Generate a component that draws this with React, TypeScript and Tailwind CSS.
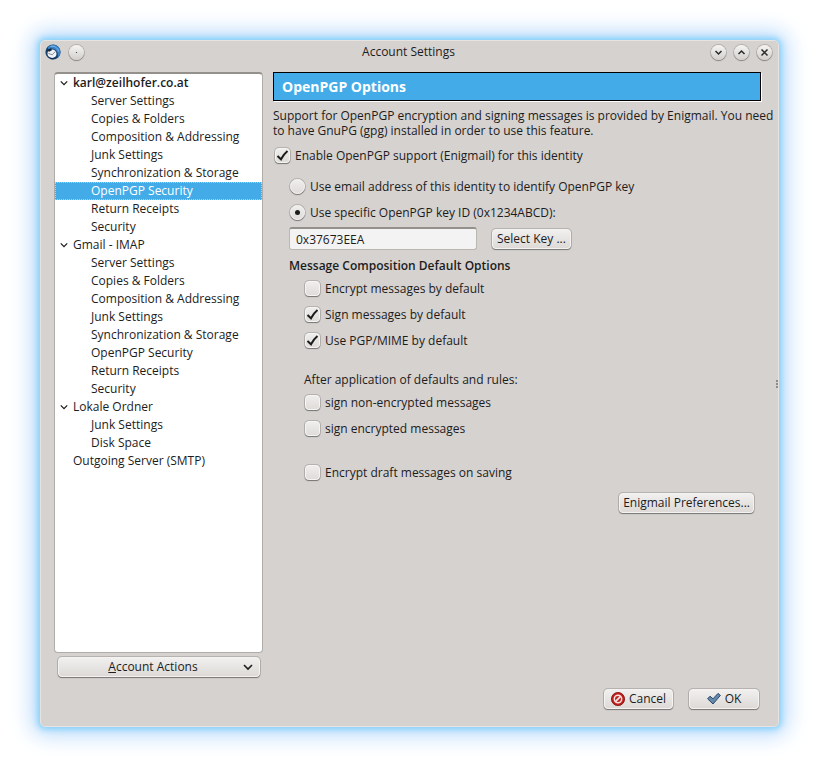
import { useState, type ReactNode } from "react"
import { clsx } from "clsx"

interface Account {
  name: string
  pages: string[]
  isDefault?: boolean
}

const ACCOUNTS: Account[] = [
  {
    name: "karl@zeilhofer.co.at",
    isDefault: true,
    pages: [
      "Server Settings",
      "Copies & Folders",
      "Composition & Addressing",
      "Junk Settings",
      "Synchronization & Storage",
      "OpenPGP Security",
      "Return Receipts",
      "Security",
    ],
  },
  {
    name: "Gmail - IMAP",
    pages: [
      "Server Settings",
      "Copies & Folders",
      "Composition & Addressing",
      "Junk Settings",
      "Synchronization & Storage",
      "OpenPGP Security",
      "Return Receipts",
      "Security",
    ],
  },
  { name: "Lokale Ordner", pages: ["Junk Settings", "Disk Space"] },
]

function Chevron({ className }: { className?: string }) {
  return (
    <svg viewBox="0 0 10 10" className={className} fill="none" stroke="currentColor" aria-hidden="true">
      <path d="M1 3l4 4 4-4" strokeWidth="1.6" />
    </svg>
  )
}

function ThunderbirdIcon() {
  return (
    <svg viewBox="0 0 16 16" className="size-4" aria-hidden="true">
      <circle cx="8" cy="8" r="7.6" fill="#17406f" />
      <path d="M3 3C6-.2 11-.2 13.800 3.400c2.600 3.600 1.800 8-1.400 10.800 1-3 .4-6.400-2.200-8.400C8.400 4.400 5.400 4 3 5z" fill="#3a82c6" />
      <path d="M5.500 2.600C9 1.400 12.600 3.400 13.600 7.400" fill="none" stroke="#8cc4ee" strokeWidth=".9" />
      <path d="M2.600 8.600C3.200 6.400 5.200 5 7.600 5.400c3 .6 4.600 3.400 3.600 6-.8 2.200-3.400 3-5.800 2.200C3.200 12.800 2 10.800 2.600 8.600z" fill="#f1f3f5" />
      <path d="M3.400 9.400l3.800 1.400 3-3.200" fill="none" stroke="#76828e" strokeWidth=".9" />
      <path d="M2 6.600l3.200-2 2.400 1.200-3.400 2z" fill="#16273a" />
      <path d="M3 12.400c2 1.800 5.400 2.200 8 .6l-2.400 2.200H6z" fill="#0f2f57" />
    </svg>
  )
}

function RoundButton({ label, children }: { label: string; children: ReactNode }) {
  return (
    <button
      type="button"
      aria-label={label}
      className="grid size-[15px] place-items-center rounded-full bg-linear-to-b from-[#f6f5f4] to-[#d2cfcc] text-[#2b2b2b] shadow-[0_1px_1px_#888,0_0_0_1px_#b5b2af]"
    >
      <svg viewBox="0 0 15 15" className="size-[15px]" fill="none" stroke="currentColor" strokeWidth="1.5">
        {children}
      </svg>
    </button>
  )
}

function PushButton({ className, children }: { className?: string; children: ReactNode }) {
  return (
    <button
      type="button"
      className={clsx(
        "flex h-5 items-center justify-center rounded-[4px] border border-[#f4f3f2] bg-linear-to-b from-[#f1f0ef] to-[#dddad7] whitespace-nowrap shadow-[0_1px_1px_#777,0_0_0_1px_#b5b2af]",
        className
      )}
    >
      {children}
    </button>
  )
}

function CheckOption({ label, checked }: { label: string; checked?: boolean }) {
  return (
    <label className="flex h-[26px] items-start gap-1 leading-[26px]">
      <span className="relative mt-1 grid size-[17px] place-items-center">
        <input
          type="checkbox"
          defaultChecked={checked}
          className="peer size-[15px] appearance-none rounded-[4px] border border-[#f6f5f4] bg-linear-to-b from-[#efeeed] to-[#dfdcd9] shadow-[0_1px_1px_#777,0_0_0_1px_#b5b2af]"
        />
        <svg
          viewBox="0 0 17 17"
          className="pointer-events-none invisible absolute inset-0 text-[#1c1c1c] peer-checked:visible"
          fill="none"
          stroke="currentColor"
          strokeWidth="2"
        >
          <path d="M3.500 9L7 12.300c1.500-3 3.500-5.800 6.500-8.300" />
        </svg>
      </span>
      {label}
    </label>
  )
}

interface RadioOptionProps {
  label: string
  checked: boolean
  onSelect: () => void
}

function RadioOption({ label, checked, onSelect }: RadioOptionProps) {
  return (
    <label className="flex h-[26px] items-start gap-1 leading-[26px]">
      <span className="relative mt-1 grid size-[17px] place-items-center">
        <input
          type="radio"
          name="key-mode"
          checked={checked}
          onChange={onSelect}
          className="peer size-[15px] appearance-none rounded-full border border-[#f6f5f4] bg-linear-to-b from-[#efeeed] to-[#dfdcd9] shadow-[0_1px_1px_#777,0_0_0_1px_#b5b2af]"
        />
        <span className="pointer-events-none invisible absolute inset-[6px] rounded-full bg-[#1c1c1c] peer-checked:visible" />
      </span>
      {label}
    </label>
  )
}

function AccountTree() {
  const [selected, setSelected] = useState("0-5")

  return (
    <nav
      aria-label="Accounts"
      className="grow rounded-[4px] border border-t-2 border-[#b0aca8] border-t-[#94908c] bg-white leading-[18px]"
    >
      <ul>
        {ACCOUNTS.map((account, i) => (
          <li key={account.name}>
            <div className={clsx("flex items-center gap-1 pl-[5px]", account.isDefault && "font-semibold")}>
              <Chevron className="mr-px size-2" />
              {account.name}
            </div>
            <ul>
              {account.pages.map((page, j) => {
                const id = `${i}-${j}`
                return (
                  <li key={page}>
                    <button
                      type="button"
                      onClick={() => setSelected(id)}
                      className={clsx(
                        "block h-[18px] w-full pl-9 text-left",
                        selected === id &&
                          "bg-[#43ace8] text-white outline-1 -outline-offset-1 outline-dotted outline-[#e5c88f]"
                      )}
                    >
                      {page}
                    </button>
                  </li>
                )
              })}
            </ul>
          </li>
        ))}
        <li className="pl-[18px]">Outgoing Server (SMTP)</li>
      </ul>
    </nav>
  )
}

function OpenPgpPane() {
  const [useKeyId, setUseKeyId] = useState(true)

  return (
    <main className="min-w-0 grow">
      <h1 className="flex h-[29px] items-center border border-black bg-[#43ace8] px-2 text-sm font-bold text-white shadow-[1px_1px_0_#fff]">
        OpenPGP Options
      </h1>
      <p className="mt-[7px] -mr-4 leading-[15px]">
        Support for OpenPGP encryption and signing messages is provided by Enigmail. You need to have GnuPG (gpg)
        installed in order to use this feature.
      </p>
      <div className="mt-[5px] pl-px">
        <CheckOption label="Enable OpenPGP support (Enigmail) for this identity" checked />
      </div>

      <div className="mt-[5px] pl-4">
        <RadioOption
          label="Use email address of this identity to identify OpenPGP key"
          checked={!useKeyId}
          onSelect={() => setUseKeyId(false)}
        />
        <RadioOption
          label="Use specific OpenPGP key ID (0x1234ABCD):"
          checked={useKeyId}
          onSelect={() => setUseKeyId(true)}
        />
        <div className="mt-px flex items-center gap-[15px]">
          <input
            type="text"
            aria-label="OpenPGP key ID"
            defaultValue="0x37673EEA"
            className="h-[23px] w-[188px] rounded-[3px] border border-t-2 border-[#bbb7b3] border-t-[#94908c] bg-[#f3f3f3] px-1.5"
          />
          <PushButton className="px-1">Select Key ...</PushButton>
        </div>

        <h2 className="mt-[7px] leading-[18px] font-semibold">Message Composition Default Options</h2>
        <div className="mt-px pl-[15px]">
          <CheckOption label="Encrypt messages by default" />
          <CheckOption label="Sign messages by default" checked />
          <CheckOption label="Use PGP/MIME by default" checked />
          <p className="mt-[17px] mb-px leading-[18px]">After application of defaults and rules:</p>
          <CheckOption label="sign non-encrypted messages" />
          <CheckOption label="sign encrypted messages" />
          <div className="mt-[18px]">
            <CheckOption label="Encrypt draft messages on saving" />
          </div>
        </div>
      </div>

      <div className="mt-[7px] flex justify-end pr-[7px]">
        <PushButton className="px-[3px]">Enigmail Preferences...</PushButton>
      </div>
    </main>
  )
}

export default function App() {
  return (
    <div className="flex min-h-screen bg-white p-10 font-['Open_Sans',sans-serif] text-xs text-[#1c1c1c]">
      <div className="relative flex grow flex-col rounded-[5px] border border-[#e6e3e0] bg-[#d6d2cf] shadow-[0_0_6px_2px_#7fd0fa,0_0_22px_8px_#b9d9fb]">
        <header className="flex h-[22px] items-center gap-2 pr-[6px] pl-[4px]">
          <div className="flex flex-1 items-center gap-2">
            <ThunderbirdIcon />
            <RoundButton label="Window menu">
              <circle cx="7.500" cy="7.500" r=".6" fill="currentColor" stroke="none" />
            </RoundButton>
          </div>
          <div>Account Settings</div>
          <div className="flex flex-1 items-center justify-end gap-2">
            <RoundButton label="Minimize">
              <path d="M4.500 6l3 3 3-3" />
            </RoundButton>
            <RoundButton label="Maximize">
              <path d="M4.500 9l3-3 3 3" />
            </RoundButton>
            <RoundButton label="Close">
              <path d="M4.500 4.500l6 6M10.500 4.500l-6 6" />
            </RoundButton>
          </div>
        </header>

        <div className="flex grow gap-[10px] pt-[9px] pr-[17px] pl-[13px]">
          <aside className="flex w-[209px] shrink-0 flex-col">
            <AccountTree />
            <PushButton className="relative mt-1 mr-[3px] ml-1">
              <span className="pr-3">
                <span className="underline">A</span>ccount Actions
              </span>
              <Chevron className="absolute right-1.5 size-[10px]" />
            </PushButton>
          </aside>
          <OpenPgpPane />
        </div>

        <footer className="flex justify-end gap-4 pt-3 pr-[19px] pb-[17px]">
          <PushButton className="w-[69px] gap-1">
            <svg viewBox="0 0 14 14" className="size-[14px]" aria-hidden="true">
              <circle cx="7" cy="7" r="6.600" fill="#c01f1a" stroke="#7d0f0c" strokeWidth=".8" />
              <circle cx="7" cy="7" r="3.700" fill="none" stroke="#f6e4e3" strokeWidth="1.500" />
              <path d="M4.400 9.600l5.200-5.200" stroke="#f6e4e3" strokeWidth="1.700" />
            </svg>
            Cancel
          </PushButton>
          <PushButton className="w-[70px] gap-1">
            <svg viewBox="0 0 14 14" className="size-[14px]" aria-hidden="true">
              <path
                d="M.6 6.800L3 4.200l3 2.600L11 1.400l2.400 2L6 12z"
                fill="#6189ae"
                stroke="#2c4866"
                strokeLinejoin="round"
              />
            </svg>
            OK
          </PushButton>
        </footer>

        {/* splitter grip on the window edge */}
        <div className="absolute top-1/2 right-0 flex -translate-y-1/2 flex-col gap-px">
          <span className="size-[2px] bg-[#8f8b88]" />
          <span className="size-[2px] bg-[#8f8b88]" />
          <span className="size-[2px] bg-[#8f8b88]" />
        </div>
      </div>
    </div>
  )
}
